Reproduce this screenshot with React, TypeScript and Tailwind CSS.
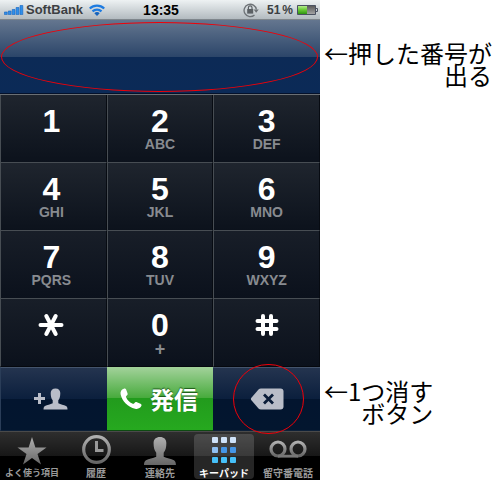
import type { ReactNode } from "react";
import clsx from "clsx";

const StarKey = () => (
  <svg className="h-7 w-7" viewBox="0 0 28 28" aria-hidden="true">
    <path
      d="M3.5 14h21M9.3 5l9.4 18M18.7 5L9.3 23"
      stroke="#fff"
      strokeWidth="4"
      strokeLinecap="round"
    />
  </svg>
);

const HashKey = () => (
  <svg className="h-7 w-7" viewBox="0 0 28 28" aria-hidden="true">
    <path
      d="M10 5v18M18 5v18M4.5 10h19M4.5 18h19"
      stroke="#fff"
      strokeWidth="4"
      strokeLinecap="round"
    />
  </svg>
);

type Key = { name: string; digit?: string; icon?: ReactNode; letters?: string };

const keys: Key[] = [
  { name: "1", digit: "1" },
  { name: "2", digit: "2", letters: "ABC" },
  { name: "3", digit: "3", letters: "DEF" },
  { name: "4", digit: "4", letters: "GHI" },
  { name: "5", digit: "5", letters: "JKL" },
  { name: "6", digit: "6", letters: "MNO" },
  { name: "7", digit: "7", letters: "PQRS" },
  { name: "8", digit: "8", letters: "TUV" },
  { name: "9", digit: "9", letters: "WXYZ" },
  { name: "star", icon: <StarKey /> },
  { name: "0", digit: "0", letters: "+" },
  { name: "hash", icon: <HashKey /> },
];

const StatusBar = () => (
  <header className="grid h-5 grid-cols-[1fr_auto_1fr] items-center border-b border-[#7f868c] bg-linear-to-b from-[#eef2f3] to-[#b3bbc0] pr-0.5 pl-1 font-bold text-[#3c3f42]">
    <div className="flex items-center">
      <svg className="h-[10px] w-5" viewBox="0 0 20 10" aria-label="Signal">
        <g fill="#2f8fea" stroke="#1463bd" strokeWidth="0.6">
          <path d="M.4 7h2.8v2.6H.4zM4.3 6h2.8v3.6H4.3zM8.2 4.5H11v5.1H8.2zM12.1 2.5h2.8v7.1h-2.8zM16 .5h2.8v9.1H16z" />
        </g>
      </svg>
      <span className="ml-0.5 text-[13px] leading-none">SoftBank</span>
      <svg className="ml-1.5 h-3 w-4" viewBox="0 0 16 12" aria-label="Wi-Fi">
        <g fill="none" stroke="#1e7be0" strokeWidth="2.2">
          <path d="M.8 4.5a10.3 10.3 0 0 1 14.4 0M3.5 7.4a6.4 6.4 0 0 1 9 0" />
        </g>
        <path d="M8 12L5.3 9.3a3.9 3.9 0 0 1 5.4 0z" fill="#1463bd" />
      </svg>
    </div>
    <span className="text-sm leading-none text-black">13:35</span>
    <div className="flex items-center justify-end">
      <svg className="h-4 w-4" viewBox="0 0 16 16" aria-label="Rotation lock">
        <path
          d="M11.5 13A6.2 6.2 0 1 1 13.4 7.5"
          fill="none"
          stroke="#6d7276"
          strokeWidth="1.3"
        />
        <path d="M10.6 7.6h5.2l-2.6 3.2z" fill="#6d7276" />
        <path d="M4.2 7h6v4.6h-6z" fill="#5b6064" />
        <path
          d="M5.4 7V5.6a1.8 1.8 0 0 1 3.6 0V7"
          fill="none"
          stroke="#5b6064"
          strokeWidth="1.2"
        />
      </svg>
      <span className="ml-2 flex gap-0.5 text-xs leading-none">
        <span>51</span>
        <span>%</span>
      </span>
      <svg className="ml-1 h-[10px] w-[21px]" viewBox="0 0 21 10" aria-label="Battery">
        <defs>
          <linearGradient id="charge" x2="0" y2="1">
            <stop offset="0" stopColor="#b4ec8e" />
            <stop offset="0.45" stopColor="#6ccc38" />
            <stop offset="1" stopColor="#2f9410" />
          </linearGradient>
          <linearGradient id="drained" x2="0" y2="1">
            <stop offset="0" stopColor="#555" />
            <stop offset="1" stopColor="#a8a8a8" />
          </linearGradient>
        </defs>
        <path d="M.5.5h18v9H.5z" fill="url(#drained)" stroke="#4a5160" />
        <path d="M1 1h9v8H1z" fill="url(#charge)" />
        <path d="M19 3.5h1.5v3H19" fill="none" stroke="#4a5160" />
      </svg>
    </div>
  </header>
);

const Keypad = () => (
  <div className="grid grid-cols-3 border-t border-[#6a6f74]">
    {keys.map((key, i) => (
      <button
        key={key.name}
        aria-label={key.name}
        className={clsx(
          "flex h-[68px] flex-col items-center border-r border-b border-l border-r-[#070b12] border-l-[#474d53] pt-2.5",
          i % 3 === 0 && "pr-1",
          i < 9 ? "border-b-[#474d53]" : "border-b-[#05080e]",
          i < 6
            ? "bg-linear-to-b from-[#1f252e] to-[#0c121c]"
            : "bg-linear-to-b from-[#181e28] to-[#0b111c]"
        )}
      >
        {key.digit ? (
          <span className="text-[32px] leading-8 font-bold text-white">
            {key.digit}
          </span>
        ) : (
          <span className="mt-0.5">{key.icon}</span>
        )}
        {key.letters && (
          <span
            className={clsx(
              "font-bold text-[#888b90]",
              key.letters === "+" ? "text-lg leading-4" : "text-sm leading-3.5"
            )}
          >
            {key.letters}
          </span>
        )}
      </button>
    ))}
  </div>
);

const personPath =
  "M12 0c3 0 4.8 1.7 4.8 4.6 0 3.3-.6 5.7-2 7.2v3c2.3 1.3 5.6 1.5 7.7 2.7 1 .6 1.5 1.7 1.5 3.5H0c0-1.8.5-2.9 1.5-3.5 2.1-1.2 5.4-1.4 7.7-2.7v-3c-1.4-1.5-2-3.9-2-7.2C7.2 1.7 9 0 12 0z";

const CallBar = () => (
  <div className="grid h-16 grid-cols-3">
    <button
      aria-label="連絡先に追加"
      className="flex items-center justify-center border-t border-b border-l border-t-[#44546c] border-b-[#0d2038] border-l-[#2a3d58] bg-[linear-gradient(#24344f,#0b1f3d_50%,#03152f_50%,#03162f)] pr-1.5"
    >
      <svg className="h-[22px] w-[34px]" viewBox="0 0 34 22" fill="#b9bdc8">
        <path d="M4 5h3v4h4v3H7v4H4v-4H0V9h4z" />
        <path d={personPath} transform="translate(9.5 .5)" />
      </svg>
    </button>
    <button className="flex items-center justify-center gap-2 border-b border-[#0e4a12] bg-[linear-gradient(#a3d29b,#46aa3b_50%,#229b1d_50%,#26a91f)] pr-0.5 text-2xl font-bold text-white text-shadow-[0_-1px_1px_#1c5a18]">
      <svg className="h-[22px] w-[22px]" viewBox="0 0 22 22" fill="#fff" aria-hidden="true">
        <path d="M3.8.8C5 .3 5.8.9 6.3 2l1.2 3.2c.4 1 .1 1.7-.7 2.2-.9.6-1 1.2-.6 2.2 1.3 2.7 3.3 4.7 6 6 1 .5 1.7.3 2.3-.6.6-.9 1.4-1.1 2.4-.7l3.6 1.5c1 .5 1.3 1.2.8 2.3-1.2 2.3-3.3 3.2-6.2 2.6C8 19.2 2 13 .6 6.2.1 3.7 1.4 1.7 3.8.8z" />
      </svg>
      <span className="font-['Noto_Sans_CJK_JP',sans-serif] leading-none">
        発信
      </span>
    </button>
    <div className="relative flex border-t border-b border-t-[#44546c] border-b-[#0d2038]">
      <button
        aria-label="1つ消す"
        className="flex flex-1 items-center justify-center bg-[linear-gradient(#24344f,#0b1f3d_50%,#03152f_50%,#03162f)]"
      >
        <svg className="h-[22px] w-[34px]" viewBox="0 0 34 22">
          <path
            d="M11 .5h19.5q3 0 3 3v15q0 3-3 3H11q-1.5 0-2.5-1L1.2 12q-.8-1 0-2L8.5 1.5q1-1 2.5-1z"
            fill="#b9bdc8"
          />
          <path d="M14 6.5l9 9M23 6.5l-9 9" stroke="#0a1c38" strokeWidth="2.8" />
        </svg>
      </button>
      <div className="pointer-events-none absolute -inset-y-1 right-4 left-5 rounded-full border border-[#f00008]" />
    </div>
  </div>
);

const tabs = [
  {
    label: "よく使う項目",
    small: true,
    icon: (
      <svg className="h-[31px] w-8" viewBox="0 0 32 31" fill="url(#tabGray)">
        <path d="M16 3l3.4 10.5h11.1L21.5 20 25 30.5 16 24l-9 6.5L10.5 20l-9-6.5h11.1z" />
      </svg>
    ),
  },
  {
    label: "履歴",
    icon: (
      <svg className="h-[31px] w-8" viewBox="0 0 32 31" fill="none">
        <circle cx="16.5" cy="15.5" r="12.8" stroke="url(#tabGray)" strokeWidth="3.2" />
        <path d="M16.5 7v9.5h7" stroke="#999" strokeWidth="3" />
      </svg>
    ),
  },
  {
    label: "連絡先",
    icon: (
      <svg className="h-[31px] w-8" viewBox="0 0 32 31" fill="url(#tabGray)">
        <path d={personPath} transform="translate(0 3) scale(1.33)" />
      </svg>
    ),
  },
  {
    label: "キーパッド",
    active: true,
    icon: (
      <svg className="h-[31px] w-8" viewBox="0 0 32 31">
        {[4, 13, 22].map((x) => (
          <g key={x}>
            <rect x={x} y="3" width="6" height="6" rx="1" fill="#cfe2f8" />
            <rect x={x} y="13" width="6" height="6" rx="1" fill={x === 4 ? "#8fc0f2" : "#4596e6"} />
            <rect x={x} y="23" width="6" height="6" rx="1" fill="#46c0f8" />
          </g>
        ))}
      </svg>
    ),
  },
  {
    label: "留守番電話",
    icon: (
      <svg className="h-[31px] w-[38px]" viewBox="0 0 38 31" fill="none">
        <g stroke="url(#tabGray)" strokeWidth="3.2">
          <circle cx="9" cy="15" r="7" />
          <circle cx="29" cy="15" r="7" />
        </g>
        <path d="M9 22.2h20" stroke="#777" strokeWidth="2.8" />
      </svg>
    ),
  },
];

const TabBar = () => (
  <nav className="grid h-[49px] grid-cols-5 border-t border-[#4a4a4a] bg-[linear-gradient(#2e2e2e,#171717_50%,#000_50%,#000)]">
    <svg className="absolute size-0" aria-hidden="true">
      <linearGradient id="tabGray" x2="0" y2="1">
        <stop offset="0" stopColor="#b0b0b0" />
        <stop offset="1" stopColor="#666" />
      </linearGradient>
    </svg>
    {tabs.map((tab) => (
      <button
        key={tab.label}
        className={clsx(
          "mx-0.5 mt-0.5 mb-0.5 flex flex-col items-center rounded-sm font-['Noto_Sans_CJK_JP',sans-serif] font-bold whitespace-nowrap",
          tab.active ? "bg-white/15 text-white" : "text-[#9a9a9a]"
        )}
      >
        {tab.icon}
        <span className={clsx("mt-0.5 leading-3", tab.small ? "text-[9px]" : "text-[10px]")}>
          {tab.label}
        </span>
      </button>
    ))}
  </nav>
);

const App = () => {
  return (
    <div className="flex bg-white font-['Liberation_Sans',Arial,sans-serif]">
      {/* Phone */}
      <main className="w-[64%] bg-black">
        <StatusBar />
        <div className="h-[74px] border-b border-[#04112a] bg-[linear-gradient(#64768f,#2b4569_51%,#0c2a56_51%,#0b2a57)] pt-0.5 pr-0.5 pb-px pl-px">
          <div className="h-full rounded-[50%] border border-[#f00008]" />
        </div>
        <Keypad />
        <CallBar />
        <TabBar />
      </main>

      {/* Notes */}
      <aside className="flex flex-1 flex-col items-start gap-[294px] pt-[42px] pl-1 text-right font-['Noto_Sans_CJK_JP',sans-serif] text-2xl leading-[22px] whitespace-nowrap text-black">
        <p>
          ←押した番号が
          <br />
          出る
        </p>
        <p>
          ←1つ消す
          <br />
          ボタン
        </p>
      </aside>
    </div>
  );
};

export default App;
